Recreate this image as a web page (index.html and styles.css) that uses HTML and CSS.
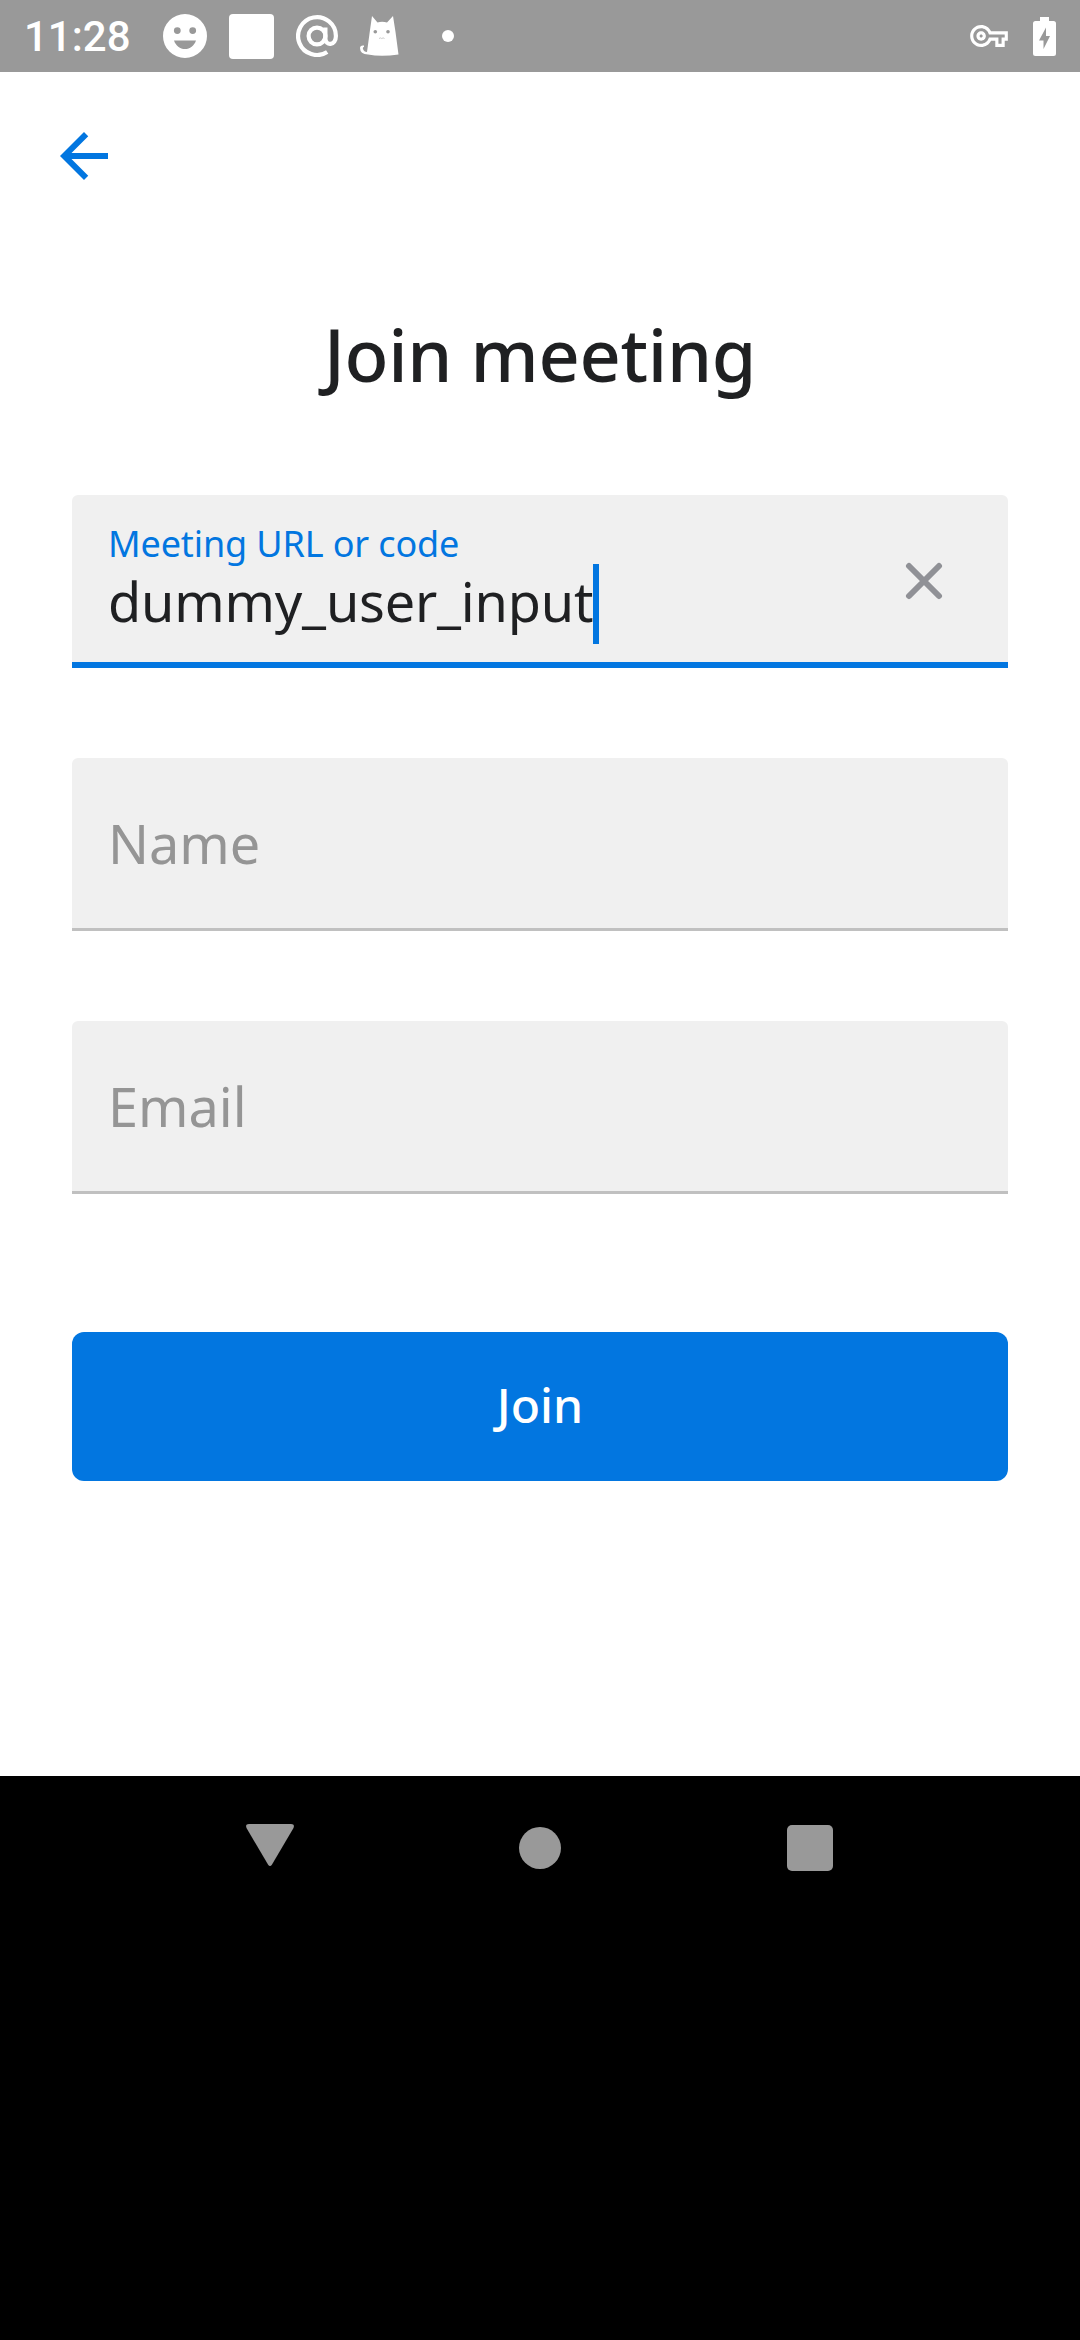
FILE: index.html
```html
<!DOCTYPE html>
<html lang="en">
<head>
<meta charset="utf-8">
<title>Join meeting</title>
<link rel="stylesheet" href="styles.css">
</head>
<body>
<header class="status">
  <span class="clock">11:28</span>
  <div class="notifications">
    <svg width="44" height="44" viewBox="0 0 44 44"><path fill="#fff" fill-rule="evenodd" d="M22 0a22 22 0 1 0 0 44a22 22 0 1 0 0-44zM14.3 13.2a3.4 3.4 0 1 1 0 6.8a3.4 3.4 0 0 1 0-6.8zM29.7 13.2a3.4 3.4 0 1 1 0 6.8a3.4 3.4 0 0 1 0-6.8zM11 26.4H33C31.2 31.8 27 35 22 35S12.800 31.800 11 26.400z"/></svg>
    <svg width="45" height="45" viewBox="0 0 45 45"><rect width="45" height="45" rx="4" fill="#fff"/></svg>
    <svg width="42" height="42" viewBox="0 0 42 42"><g fill="none" stroke="#fff" stroke-width="4.200"><circle cx="21" cy="21" r="8.400"/><path d="M29.400 12.500V23.500C29.400 31 39.900 31 39.900 21A18.900 18.900 0 1 0 31.200 37"/></g></svg>
    <svg width="39" height="40" viewBox="0 0 39 40"><path fill="#fff" d="M12 0L17.500 6.500Q22 5.200 27 6.500L33 0L35.500 16L38.500 38.500Q21 41 8 38.500Q0 38 0 32Q0 29 4 29.500V31Q2.500 31 3 33Q4 36 7 36L10 14z"/><circle cx="15.300" cy="15.800" r="1.800" fill="#999"/><circle cx="28" cy="15.800" r="1.800" fill="#999"/><path d="M19 22.500q1.500-1.200 2.700 0q1.500-1.200 2.800 0" fill="none" stroke="#ccc"/></svg>
    <svg width="12" height="12" viewBox="0 0 12 12"><circle cx="6" cy="6" r="6" fill="#fff"/></svg>
  </div>
  <div class="system">
    <svg width="38" height="22" viewBox="0 5 24 14"><path fill="#fff" d="M22 19h-6v-4h-2.680c-1.140 2.420-3.600 4-6.320 4-3.860 0-7-3.140-7-7s3.140-7 7-7c2.720 0 5.170 1.580 6.320 4H24v6h-2v4zm-4-2h2v-4h2v-2H11.940l-.230-.670C11.010 8.340 9.110 7 7 7c-2.760 0-5 2.240-5 5s2.240 5 5 5c2.110 0 4.010-1.340 4.710-3.330l.230-.670H18v4zM7 15c-1.650 0-3-1.350-3-3s1.350-3 3-3 3 1.350 3 3-1.350 3-3 3zm0-4c-.550 0-1 .450-1 1s.450 1 1 1 1-.450 1-1-.450-1-1-1z"/></svg>
    <svg width="23" height="39" viewBox="0 0 23 39"><path fill="#fff" fill-rule="evenodd" d="M7 0H16V4H20.500Q23 4 23 6.500V36.500Q23 39 20.500 39H2.500Q0 39 0 36.500V6.500Q0 4 2.500 4H7zM13 10.500L6 23.500H10.500V32L17 19H13z"/></svg>
  </div>
</header>
<main class="screen">
  <svg class="back" width="72" height="72" viewBox="0 0 24 24"><path fill="#0276e0" d="M20 11H7.830l5.590-5.590L12 4l-8 8 8 8 1.410-1.410L7.830 13H20v-2z"/></svg>
  <h1 class="title">Join meeting</h1>
  <div class="form">
    <div class="field active">
      <div class="entry">
        <label class="label">Meeting URL or code</label>
        <div class="value"><span>dummy_user_input</span><i class="caret"></i></div>
      </div>
      <svg class="clear" width="38" height="38" viewBox="0 0 38 38"><path d="M4 4L34 34M34 4L4 34" stroke="#909196" stroke-width="6" stroke-linecap="round"/></svg>
    </div>
    <div class="field"><span class="hint">Name</span></div>
    <div class="field"><span class="hint">Email</span></div>
  </div>
  <button class="join">Join</button>
</main>
<nav class="navbar">
  <svg class="nav-back" width="50" height="48" viewBox="0 0 50 48"><path fill="#999" d="M4 3H46Q50 3 48.500 7L27 43.500Q25 46.500 23 43.500L1.500 7Q0 3 4 3z"/></svg>
  <svg width="42" height="42" viewBox="0 0 42 42"><circle cx="21" cy="21" r="21" fill="#999"/></svg>
  <svg width="46" height="46" viewBox="0 0 46 46"><rect width="46" height="46" rx="5" fill="#999"/></svg>
</nav>
</body>
</html>
```
FILE: styles.css
```css
* { box-sizing: border-box; }

body {
  margin: 0;
  width: 1080px;
  height: 2340px;
  display: flex;
  flex-direction: column;
  background: #000;
  font-family: "Noto Sans", sans-serif;
  color: #1f2022;
}

svg { display: block; flex: none; }

.status {
  height: 72px;
  padding: 0 24px;
  display: flex;
  align-items: center;
  background: #999;
}

.clock {
  width: 139px;
  font: 500 42px/72px Roboto, sans-serif;
  color: #fff;
  padding-top: 2px;
}

.notifications {
  display: flex;
  align-items: center;
  gap: 22px;
}

.notifications svg:last-child { margin-left: 21px; }

.system {
  margin-left: auto;
  display: flex;
  align-items: center;
  gap: 25px;
}

.screen {
  height: 1704px;
  padding: 48px 72px 0;
  display: flex;
  flex-direction: column;
  background: #fff;
}

.back { margin-left: -24px; }

.title {
  margin: 113px 0 0;
  font-size: 72px;
  font-weight: 500;
  line-height: 98px;
  letter-spacing: -0.3px;
  text-align: center;
}

.form {
  margin-top: 92px;
  display: flex;
  flex-direction: column;
  gap: 90px;
}

.field {
  height: 173px;
  padding: 0 36px;
  display: flex;
  align-items: center;
  background: #f0f0f0;
  border-bottom: 3px solid #c0c0c0;
  border-radius: 6px 6px 0 0;
}

.field.active {
  padding-right: 65px;
  border-bottom: 6px solid #0276e0;
}

.entry {
  flex: 1;
  height: 100%;
  padding-top: 25px;
}

.label {
  display: block;
  font-size: 36px;
  line-height: 48px;
  letter-spacing: -0.13px;
  color: #0276e0;
}

.value {
  display: flex;
  align-items: center;
  font-size: 54px;
  line-height: 66px;
  letter-spacing: -0.2px;
}

.caret {
  width: 6px;
  height: 80px;
  margin: -4px 0 -10px;
  background: #0276e0;
}

.clear { margin-top: 5px; }

.hint {
  font-size: 54px;
  line-height: 74px;
  color: #959595;
}

.join {
  height: 149px;
  margin-top: 138px;
  padding: 0 0 4px;
  border: 0;
  border-radius: 12px;
  background: #0276e0;
  color: #fff;
  font: 500 48px/66px "Noto Sans", sans-serif;
}

.navbar {
  height: 144px;
  padding: 0 135px;
  display: grid;
  grid-template-columns: repeat(3, 1fr);
  place-items: center;
}

.nav-back { margin-bottom: 6px; }
```
